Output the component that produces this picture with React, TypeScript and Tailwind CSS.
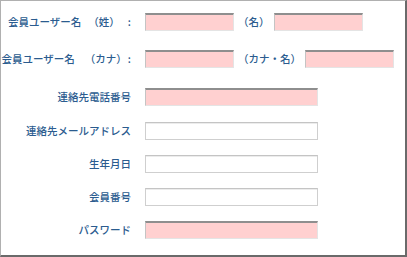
const pink =
  'h-[18px] bg-[#ffd0d0] border-t-2 border-t-[#8e8e8e] border-l border-l-[#c4c4c4] border-r border-r-[#e4e4e4] border-b border-b-[#e4e4e4]';
const white =
  'h-[18px] bg-white border border-[#cfcfcf] border-t-[#c4c4c4] shadow-[inset_0_1px_0_#ececec]';

function Row({ label, input, top }: { label: string; input: string; top: string }) {
  return (
    <div className={`flex items-center ${top}`}>
      <div className="w-[130px] shrink-0 text-right whitespace-nowrap">{label}</div>
      <div className={`ml-[14px] w-[173px] ${input}`} />
    </div>
  );
}

export default function App() {
  return (
    <div
      className="w-[407px] h-[257px] bg-white border-t border-l border-[#b0b0b0] border-r-2 border-b-2 border-r-[#6a6a6a] border-b-[#6a6a6a] text-[10.5px] font-medium leading-none text-[#2b5c8f] flex flex-col pt-[12px] whitespace-nowrap"
      style={{ fontFamily: '"Noto Sans CJK JP", "Noto Sans", sans-serif' }}
    >
      <div className="flex items-center">
        <div className="w-[130px] shrink-0 flex justify-end items-center">
          <span className="shrink-0">会員ユーザー名</span>
          <span className="shrink-0 ml-[7px]">（姓）</span>
          <span className="shrink-0 ml-[8px]">:</span>
        </div>
        <div className={`ml-[14px] w-[89px] ${pink}`} />
        <span className="ml-[4px]">（名）</span>
        <div className={`ml-[4px] w-[89px] ${pink}`} />
      </div>
      <div className="flex items-center mt-[19px]">
        <div className="w-[130px] shrink-0 flex justify-end items-center">
          <span className="shrink-0">会員ユーザー名</span>
          <span className="shrink-0 ml-[10px]">（カナ）</span>
          <span className="shrink-0 ml-[1px]">:</span>
        </div>
        <div className={`ml-[14px] w-[89px] ${pink}`} />
        <span className="ml-[4px]">（カナ・名）</span>
        <div className={`ml-[4px] w-[89px] ${pink}`} />
      </div>
      <Row label="連絡先電話番号" input={pink} top="mt-[20px]" />
      <Row label="連絡先メールアドレス" input={white} top="mt-[16px]" />
      <Row label="生年月日" input={white} top="mt-[15px]" />
      <Row label="会員番号" input={white} top="mt-[15px]" />
      <Row label="パスワード" input={pink} top="mt-[15px]" />
    </div>
  );
}
